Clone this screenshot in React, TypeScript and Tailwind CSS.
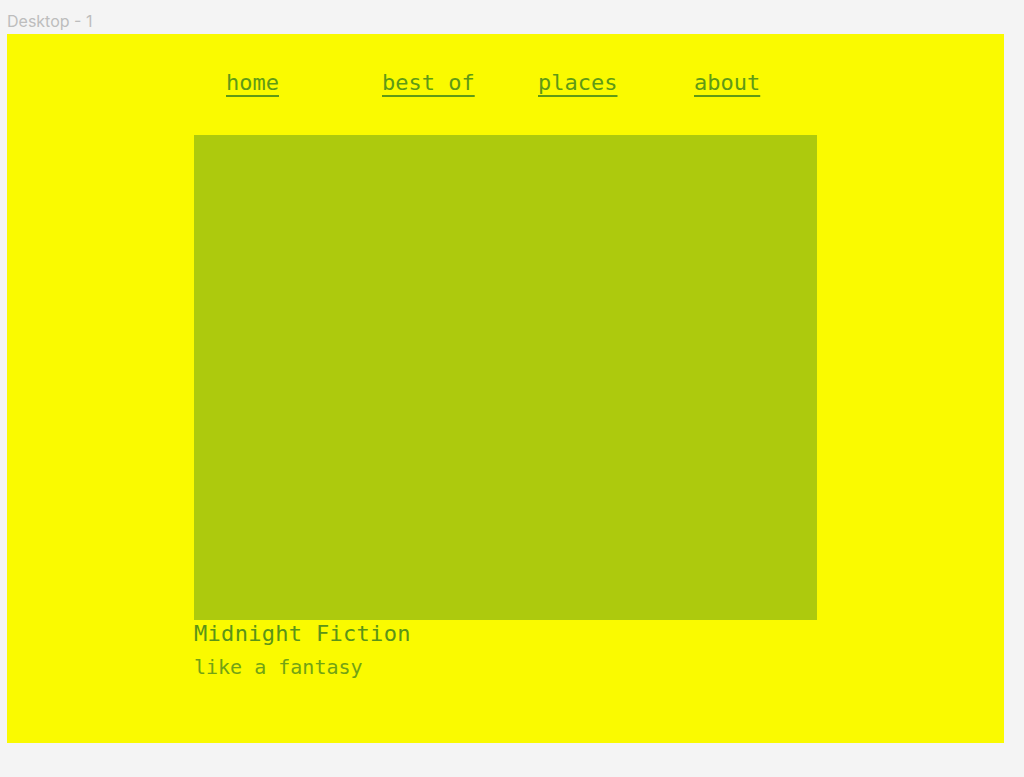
export default function App() {
  const links = ["home", "best of", "places", "about"];

  return (
    <div className="min-h-[777px] w-[1024px] bg-[#f4f4f4] pl-[7px] pt-[10px]">
      <div className="h-[24px] text-[16px] leading-[22px] text-[#bdbdbd] font-['Inter','Roboto',sans-serif]">
        Desktop - 1
      </div>
      <div className="flex h-[709px] w-[997px] flex-col bg-[#fafa00] pt-[34px] font-['DejaVu_Sans_Mono',monospace]">
        <nav className="ml-[219px] grid grid-cols-[156px_156px_156px_156px]">
          {links.map((l) => (
            <a
              key={l}
              href="#"
              className="justify-self-start text-[22px] leading-[30px] text-[#5f9a16] underline decoration-[1.5px] underline-offset-[5px]"
            >
              {l}
            </a>
          ))}
        </nav>
        <div className="ml-[187px] mt-[37px] flex flex-col">
          <div className="h-[485px] w-[623px] bg-[#adca0d]" />
          <h2 className="mt-[1px] text-[22px] leading-[26px] tracking-[0.3px] text-[#5a9418]">
            Midnight Fiction
          </h2>
          <p className="mt-[7px] text-[20px] leading-[26px] text-[#72a314]">
            like a fantasy
          </p>
        </div>
      </div>
    </div>
  );
}
